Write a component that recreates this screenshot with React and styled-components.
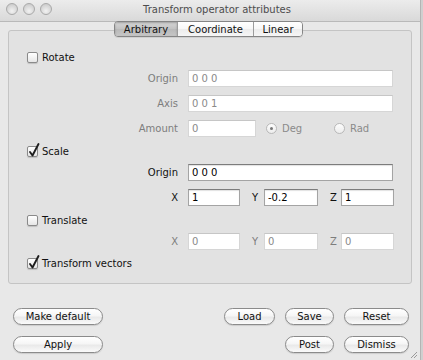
import React from "react";
import styled, { createGlobalStyle } from "styled-components";

const Global = createGlobalStyle`
  html, body { margin: 0; padding: 0; background: #cfcfcf; }
  body { font-family: "DejaVu Sans", "Liberation Sans", sans-serif; font-size: 10px; }
  * { box-sizing: border-box; }
`;

const Window = styled.div`
  position: relative;
  width: 421px;
  height: 360px;
  background: #e8e8e8;
  border-right: 1px solid #b4b4b4;
  display: flex;
  flex-direction: column;
  overflow: hidden;
`;

const TitleBar = styled.div`
  height: 22px;
  flex: none;
  display: grid;
  grid-template-columns: 1fr auto 1fr;
  align-items: center;
  padding-left: 14px;
  background: linear-gradient(#ececec, #d9d9d9);
  border-bottom: 1px solid #b9b9b9;
`;

const Lights = styled.div`
  display: flex;
  gap: 5px;
  margin-left: -8px;
  margin-top: -3px;
`;

const Light = styled.span`
  width: 12px;
  height: 12px;
  border-radius: 50%;
  border: 1px solid #a9a9a9;
  background: radial-gradient(circle at 50% 70%, #f2f2f2 0%, #d6d6d6 60%, #c4c4c4 100%);
`;

const Title = styled.div`
  color: #4d4d4d;
  font-size: 10px;
  margin-top: -3px;
`;

const TabStrip = styled.div`
  position: relative;
  z-index: 1;
  align-self: center;
  display: flex;
  height: 16px;
  margin-top: -1px;
  margin-left: -3px;
  margin-bottom: -7px;
  border: 1px solid #858585;
  border-radius: 4px;
  overflow: hidden;
  box-shadow: 0 1px 0 rgba(0, 0, 0, 0.08);
`;

const Tab = styled.div`
  width: ${(p) => p.$w}px;
  display: flex;
  align-items: center;
  justify-content: center;
  color: #111;
  font-size: 10px;
  border-left: ${(p) => (p.$first ? "none" : "1px solid #9c9c9c")};
  background: ${(p) =>
    p.$active
      ? "linear-gradient(#d6d6d6, #c2c2c2 50%, #b9b9b9 51%, #c6c6c6)"
      : "linear-gradient(#ffffff, #f7f7f7 50%, #ececec 51%, #f6f6f6)"};
  box-shadow: ${(p) => (p.$active ? "inset 0 1px 2px rgba(0,0,0,0.25)" : "none")};
`;

const Panel = styled.div`
  margin: 0 8px;
  height: 254px;
  flex: none;
  border: 1px solid #c4c4c4;
  border-radius: 3px;
  background: #e2e2e2;
  padding: 18px 18px 0 18px;
  display: flex;
  flex-direction: column;
`;

const CheckRow = styled.div`
  display: flex;
  align-items: center;
  gap: 4px;
  height: 16px;
  margin-top: ${(p) => p.$mt || 0}px;
  color: #111;
`;

const Box = styled.span`
  position: relative;
  width: 11px;
  height: 11px;
  border: 1px solid #8a8a8a;
  border-radius: 2px;
  background: linear-gradient(#ffffff, #e6e6e6);
  box-shadow: 0 1px 1px rgba(0, 0, 0, 0.15);
`;

const Tick = styled.svg`
  position: absolute;
  left: 0px;
  top: -4px;
  width: 12px;
  height: 14px;
  overflow: visible;
`;

const FieldRow = styled.div`
  display: grid;
  grid-template-columns: 151px 1fr;
  column-gap: 10px;
  align-items: center;
  height: 17px;
  margin-top: ${(p) => p.$mt || 0}px;
`;

const Label = styled.span`
  text-align: right;
  color: ${(p) => (p.$on ? "#111" : "#7d7d7d")};
  font-size: 10px;
`;

const Field = styled.input`
  width: ${(p) => (p.$w ? `${p.$w}px` : "100%")};
  height: 17px;
  padding: 0 3px;
  margin: 0;
  font-family: "DejaVu Sans", "Liberation Sans", sans-serif;
  font-size: 10px;
  outline: none;
  background: #fff;
  color: ${(p) => (p.$on ? "#000" : "#8a8a8a")};
  border: 1px solid ${(p) => (p.$on ? "#a4a4a4" : "#d6d6d6")};
  border-top-color: ${(p) => (p.$on ? "#7c7c7c" : "#c6c6c6")};
  box-shadow: ${(p) => (p.$on ? "inset 0 1px 1px rgba(0,0,0,0.12)" : "none")};
  border-radius: 0;
`;

const Inline = styled.div`
  display: flex;
  align-items: center;
`;

const AxisLabel = styled.span`
  width: ${(p) => p.$w}px;
  margin-left: ${(p) => p.$ml}px;
  color: ${(p) => (p.$on ? "#111" : "#7d7d7d")};
`;

const RadioOption = styled.div`
  display: flex;
  align-items: center;
  gap: 5px;
  width: ${(p) => p.$w}px;
  color: #8a8a8a;
  margin-left: ${(p) => p.$ml || 0}px;
`;

const Radio = styled.span`
  width: 11px;
  height: 11px;
  border-radius: 50%;
  border: 1px solid #b8b8b8;
  background: linear-gradient(#fdfdfd, #ececec);
  display: flex;
  align-items: center;
  justify-content: center;
  &::after {
    content: "";
    display: ${(p) => (p.$on ? "block" : "none")};
    width: 3px;
    height: 3px;
    border-radius: 50%;
    background: #777;
  }
`;

const Footer = styled.div`
  display: grid;
  grid-template-columns: 90px 1fr 51px 49px 65px;
  grid-template-rows: 17px 17px;
  column-gap: 10px;
  row-gap: 11px;
  margin-top: 24px;
  padding: 0 11px 0 13px;
`;

const Button = styled.button`
  grid-column: ${(p) => p.$col};
  grid-row: ${(p) => p.$row};
  height: 17px;
  padding: 0;
  margin: 0;
  font-family: "DejaVu Sans", "Liberation Sans", sans-serif;
  font-size: 10px;
  color: #111;
  border: 1px solid #8b8b8b;
  border-radius: 9px;
  background: linear-gradient(#ffffff, #f6f6f6 45%, #e9e9e9 55%, #fafafa);
  box-shadow: 0 1px 1px rgba(0, 0, 0, 0.12);
`;

const Grip = styled.svg`
  position: absolute;
  right: 2px;
  bottom: 1px;
  width: 8px;
  height: 8px;
`;

function Check({ checked, children, mt }) {
  return (
    <CheckRow $mt={mt}>
      <Box>
        {checked && (
          <Tick viewBox="0 0 12 14">
            <path d="M2 9 L4.5 12.5 L10.5 1" fill="none" stroke="#1e1e1e" strokeWidth="1.9" strokeLinecap="round" strokeLinejoin="round" />
          </Tick>
        )}
      </Box>
      <span>{children}</span>
    </CheckRow>
  );
}

function XYZ({ on, x, y, z, mt }) {
  return (
    <FieldRow $mt={mt}>
      <Label $on={on}>X</Label>
      <Inline>
        <Field $on={on} $w={52} defaultValue={x} readOnly />
        <AxisLabel $on={on} $w={12} $ml={12}>Y</AxisLabel>
        <Field $on={on} $w={54} defaultValue={y} readOnly />
        <AxisLabel $on={on} $w={11} $ml={12}>Z</AxisLabel>
        <Field $on={on} $w={53} defaultValue={z} readOnly />
      </Inline>
    </FieldRow>
  );
}

export default function App() {
  return (
    <>
      <Global />
      <Window>
        <TitleBar>
          <Lights>
            <Light />
            <Light />
            <Light />
          </Lights>
          <Title>Transform operator attributes</Title>
          <span />
        </TitleBar>
        <TabStrip>
          <Tab $w={62} $first $active>Arbitrary</Tab>
          <Tab $w={76}>Coordinate</Tab>
          <Tab $w={49}>Linear</Tab>
        </TabStrip>
        <Panel>
          <Check>Rotate</Check>
          <FieldRow $mt={5}>
            <Label>Origin</Label>
            <Field defaultValue="0 0 0" readOnly />
          </FieldRow>
          <FieldRow $mt={8}>
            <Label>Axis</Label>
            <Field defaultValue="0 0 1" readOnly />
          </FieldRow>
          <FieldRow $mt={8}>
            <Label>Amount</Label>
            <Inline>
              <Field $w={68} defaultValue="0" readOnly />
              <RadioOption $w={68} $ml={10}>
                <Radio $on />
                <span>Deg</span>
              </RadioOption>
              <RadioOption>
                <Radio />
                <span>Rad</span>
              </RadioOption>
            </Inline>
          </FieldRow>
          <Check checked mt={6}>Scale</Check>
          <FieldRow $mt={5}>
            <Label $on>Origin</Label>
            <Field $on defaultValue="0 0 0" readOnly />
          </FieldRow>
          <XYZ on x="1" y="-0.2" z="1" mt={8} />
          <Check mt={6}>Translate</Check>
          <XYZ x="0" y="0" z="0" mt={5} />
          <Check checked mt={5}>Transform vectors</Check>
        </Panel>
        <Footer>
          <Button $col={1} $row={1}>Make default</Button>
          <Button $col={3} $row={1}>Load</Button>
          <Button $col={4} $row={1}>Save</Button>
          <Button $col={5} $row={1}>Reset</Button>
          <Button $col={1} $row={2}>Apply</Button>
          <Button $col={4} $row={2}>Post</Button>
          <Button $col={5} $row={2}>Dismiss</Button>
        </Footer>
        <Grip viewBox="0 0 8 8">
          <path d="M7 1 L1 7 M7 4 L4 7" stroke="#9a9a9a" strokeWidth="1" />
        </Grip>
      </Window>
    </>
  );
}
